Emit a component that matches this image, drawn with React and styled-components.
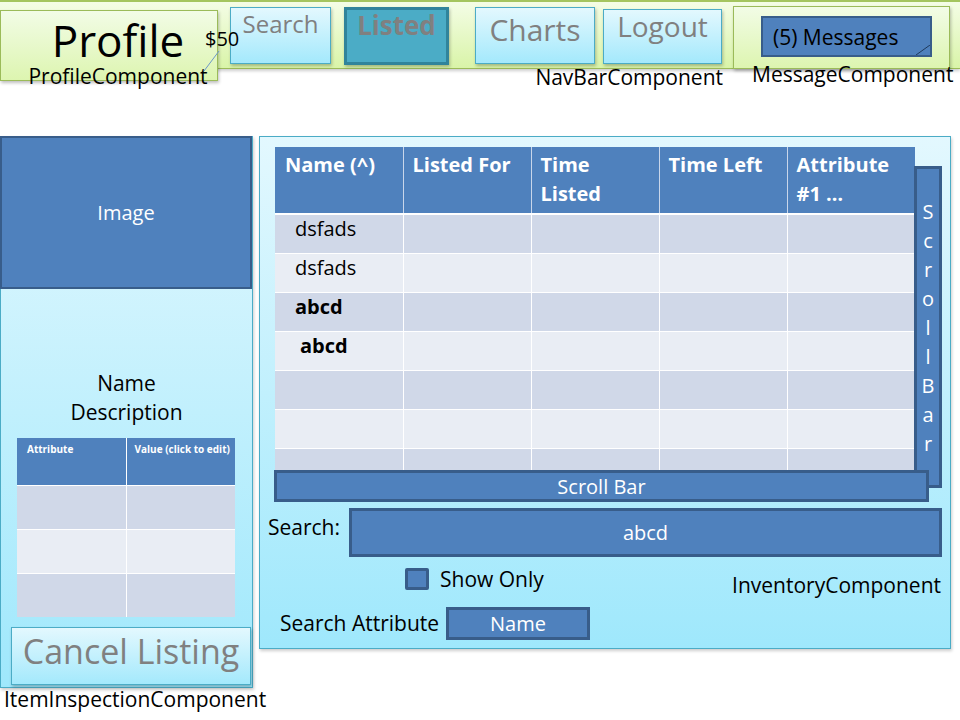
import React from "react";
import styled, { createGlobalStyle, css } from "styled-components";

const GlobalStyle = createGlobalStyle`
  html, body {
    margin: 0;
    padding: 0;
    background: #ffffff;
  }
  body {
    font-family: "Open Sans", "Liberation Sans", sans-serif;
    color: #000;
  }
`;

const lightBlue = css`
  background: linear-gradient(#e3f8fe, #a4e9fc);
  border: 1px solid #4bacc6;
  box-shadow: 1px 2px 3px rgba(0, 0, 0, 0.25);
`;

const darkBlue = css`
  background: #4f81bd;
  border: 2px solid #385d8a;
  color: #fff;
`;

const Page = styled.div`
  width: 960px;
  height: 720px;
  overflow: hidden;
`;

/* ---------- top bar ---------- */

const TopBar = styled.header`
  box-sizing: border-box;
  height: 69px;
  display: flex;
  align-items: flex-start;
  background: linear-gradient(#f4fde6, #d9f4a8);
  border-top: 2px solid #a4c55f;
  border-bottom: 1px solid #9bbb59;
  box-shadow: 0 2px 3px rgba(0, 0, 0, 0.2);
`;

const ProfileCard = styled.div`
  position: relative;
  flex-shrink: 0;
  box-sizing: border-box;
  width: 218px;
  height: 71px;
  margin-top: 8px;
  padding-left: 18px;
  display: flex;
  flex-direction: column;
  align-items: center;
  background: linear-gradient(#f2fce6, #ddf5b0);
  border: 1px solid #9bbb59;
  box-shadow: 1px 2px 3px rgba(0, 0, 0, 0.25);
`;

const ProfileTitle = styled.div`
  font-size: 44px;
  line-height: 44px;
  margin-top: 7px;
`;

const Caption = styled.div`
  font-size: 21px;
  line-height: 21px;
  white-space: nowrap;
`;

const ProfileCaption = styled(Caption)`
  margin-top: 4px;
`;

const Balance = styled.span`
  position: absolute;
  left: 204px;
  top: 18px;
  font-size: 20px;
  line-height: 20px;
`;

const Connector = styled.svg`
  position: absolute;
  left: 200px;
  top: 38px;
  overflow: visible;
`;

const NavGroup = styled.nav`
  margin-left: 12px;
  margin-top: 5px;
  display: flex;
  flex-direction: column;
  align-items: flex-end;
`;

const NavRow = styled.div`
  display: flex;
  align-items: flex-start;
`;

const NavButton = styled.div`
  box-sizing: border-box;
  width: ${(p) => p.$w}px;
  height: ${(p) => p.$h}px;
  margin-left: ${(p) => p.$gap || 0}px;
  margin-top: ${(p) => p.$top || 0}px;
  padding-top: ${(p) => p.$pad}px;
  text-align: center;
  color: #808080;
  font-size: ${(p) => p.$size}px;
  line-height: ${(p) => p.$size}px;
  ${(p) =>
    p.$active
      ? css`
          background: #4bacc6;
          border: 3px solid #31849b;
          font-weight: 700;
          box-shadow: 1px 2px 3px rgba(0, 0, 0, 0.25);
        `
      : lightBlue}
`;

const NavCaption = styled(Caption)`
  margin-top: 2px;
  margin-right: -1px;
`;

const MessageGroup = styled.div`
  margin-left: 11px;
  margin-top: 4px;
  display: flex;
  flex-direction: column;
`;

const MessageBox = styled.div`
  box-sizing: border-box;
  width: 217px;
  height: 63px;
  padding: 9px 0 0 27px;
  background: linear-gradient(#f2fce6, #ddf5b0);
  border: 1px solid #9bbb59;
  box-shadow: 1px 2px 3px rgba(0, 0, 0, 0.25);
`;

const MessageButton = styled.div`
  position: relative;
  box-sizing: border-box;
  width: 171px;
  height: 41px;
  padding-left: 10px;
  display: flex;
  align-items: center;
  ${darkBlue};
  color: #000;
  font-size: 21px;
`;

const CornerMark = styled.svg`
  position: absolute;
  right: 0;
  bottom: 0;
`;

const MessageCaption = styled(Caption)`
  margin-top: -5px;
  margin-left: 19px;
`;

/* ---------- main area ---------- */

const Main = styled.main`
  margin-top: 67px;
  display: flex;
  align-items: flex-start;
`;

const LeftColumn = styled.div`
  width: 253px;
  flex-shrink: 0;
  display: flex;
  flex-direction: column;
`;

const Panel = styled.section`
  box-sizing: border-box;
  flex-shrink: 0;
  width: ${(p) => p.$w}px;
  height: ${(p) => p.$h}px;
  background: linear-gradient(#e3f8fe, #9fe8fc);
  border: 1px solid #4bacc6;
  box-shadow: 1px 2px 3px rgba(0, 0, 0, 0.2);
`;

const InspectPanel = styled(Panel)`
  display: flex;
  flex-direction: column;
`;

const ImageBox = styled.div`
  box-sizing: border-box;
  height: 153px;
  margin: -1px 0 0 -1px;
  display: flex;
  align-items: center;
  justify-content: center;
  ${darkBlue};
  font-size: 20px;
`;

const NameBlock = styled.div`
  margin-top: 80px;
  text-align: center;
  font-size: 21px;
  line-height: 29px;
`;

const AttrTable = styled.table`
  margin: 11px 0 0 16px;
  width: 218px;
  border-collapse: collapse;
  table-layout: fixed;
`;

const AttrHead = styled.th`
  height: 43px;
  padding: 4px 0 0 10px;
  vertical-align: top;
  text-align: left;
  background: #4f81bd;
  color: #fff;
  font-size: 10px;
  font-weight: 700;
  border-right: 1px solid #fff;
  &:last-child {
    padding-left: 8px;
    border-right: none;
  }
`;

const AttrCell = styled.td`
  height: 43px;
  padding: 0;
  background: ${(p) => (p.$odd ? "#d0d8e8" : "#e9edf4")};
  border-top: 1px solid #fff;
  border-right: 1px solid #fff;
  &:last-child {
    border-right: none;
  }
`;

const GhostButton = styled.div`
  box-sizing: border-box;
  width: 240px;
  height: 58px;
  margin: 10px 0 0 10px;
  padding-top: 6px;
  text-align: center;
  color: #808080;
  font-size: 34px;
  line-height: 34px;
  ${lightBlue};
`;

const InspectCaption = styled(Caption)`
  margin: 1px 0 0 4px;
`;

const InventoryPanel = styled(Panel)`
  margin-left: 6px;
  padding: 10px 8px 0 8px;
  display: flex;
  flex-direction: column;
`;

const GridArea = styled.div`
  display: flex;
  align-items: flex-start;
`;

const TableClip = styled.div`
  margin-left: 7px;
  width: 640px;
  height: 323px;
  overflow: hidden;
`;

const ItemTable = styled.table`
  width: 640px;
  border-collapse: collapse;
  table-layout: fixed;
`;

const HeadCell = styled.th`
  box-sizing: border-box;
  height: 67px;
  padding: 3px 0 0 9px;
  vertical-align: top;
  text-align: left;
  background: #4f81bd;
  background-clip: padding-box;
  color: #fff;
  font-size: 20px;
  font-weight: 700;
  line-height: 29px;
  border-left: 1px solid #c9d6ea;
  border-bottom: 2px solid #fff;
  &:first-child {
    border-left: none;
    padding-left: 10px;
  }
`;

const BodyCell = styled.td`
  box-sizing: border-box;
  height: 39px;
  padding: 4px 0 0 ${(p) => (p.$indent ? 25 : 20)}px;
  vertical-align: top;
  background: ${(p) => (p.$odd ? "#d0d8e8" : "#e9edf4")};
  background-clip: padding-box;
  font-size: 20px;
  line-height: 20px;
  font-weight: ${(p) => (p.$bold ? 700 : 400)};
  border-left: 1px solid #fff;
  border-bottom: 1px solid #fff;
  &:first-child {
    border-left: none;
  }
`;

const VScroll = styled.div`
  box-sizing: border-box;
  width: 28px;
  height: 322px;
  margin: 19px 0 0 -1px;
  display: flex;
  flex-direction: column;
  align-items: center;
  justify-content: center;
  ${darkBlue};
  border-width: 3px;
  font-size: 20px;
  line-height: 29px;
`;

const HScroll = styled.div`
  position: relative;
  z-index: 1;
  box-sizing: border-box;
  width: 655px;
  height: 32px;
  margin: -18px 0 0 6px;
  display: flex;
  align-items: center;
  justify-content: center;
  ${darkBlue};
  border-width: 3px;
  font-size: 20px;
`;

const SearchRow = styled.div`
  margin-top: 6px;
  display: flex;
  align-items: flex-start;
`;

const Label = styled.span`
  font-size: 21px;
  line-height: 21px;
  white-space: nowrap;
`;

const SearchLabel = styled(Label)`
  width: 81px;
  margin-top: 9px;
`;

const SearchInput = styled.div`
  box-sizing: border-box;
  flex: 1;
  height: 49px;
  display: flex;
  align-items: center;
  justify-content: center;
  ${darkBlue};
  border-width: 3px;
  font-size: 20px;
`;

const OptionRow = styled.div`
  margin-top: 11px;
  display: flex;
  align-items: flex-start;
  justify-content: space-between;
`;

const CheckGroup = styled.label`
  margin-left: 137px;
  display: flex;
  align-items: center;
  gap: 11px;
  height: 22px;
`;

const CheckBox = styled.span`
  box-sizing: border-box;
  width: 24px;
  height: 22px;
  border-radius: 2px;
  ${darkBlue};
  border-width: 3px;
`;

const InventoryCaption = styled(Caption)`
  margin: 7px 1px 0 0;
`;

const AttrRow = styled.div`
  margin-top: 11px;
  display: flex;
  align-items: center;
`;

const AttrLabel = styled(Label)`
  margin-left: 12px;
  width: 166px;
`;

const SelectBox = styled.div`
  box-sizing: border-box;
  width: 144px;
  height: 33px;
  display: flex;
  align-items: center;
  justify-content: center;
  ${darkBlue};
  border-width: 3px;
  font-size: 20px;
`;

const columns = [
  ["Name (^)"],
  ["Listed For"],
  ["Time", "Listed"],
  ["Time Left"],
  ["Attribute", "#1 \u2026"],
];

const rows = [
  { name: "dsfads" },
  { name: "dsfads" },
  { name: "abcd", bold: true },
  { name: "abcd", bold: true, indent: true },
  {},
  {},
  {},
];

const navItems = [
  { label: "Search", w: 101, h: 57, size: 24, pad: 4 },
  { label: "Listed", w: 105, h: 58, size: 26, pad: 2, gap: 13, active: true },
  { label: "Charts", w: 120, h: 57, size: 30, pad: 7, gap: 26 },
  { label: "Logout", w: 119, h: 55, size: 28, pad: 2, gap: 8, top: 2 },
];

export default function App() {
  return (
    <Page>
      <GlobalStyle />
      <TopBar>
        <ProfileCard>
          <ProfileTitle>Profile</ProfileTitle>
          <ProfileCaption>ProfileComponent</ProfileCaption>
          <Balance>$50</Balance>
          <Connector width="20" height="24">
            <line x1="3" y1="22" x2="18" y2="2" stroke="#6b97c9" strokeWidth="1" />
          </Connector>
        </ProfileCard>

        <NavGroup>
          <NavRow>
            {navItems.map((n) => (
              <NavButton
                key={n.label}
                $w={n.w}
                $h={n.h}
                $size={n.size}
                $pad={n.pad}
                $gap={n.gap}
                $top={n.top}
                $active={n.active}
              >
                {n.label}
              </NavButton>
            ))}
          </NavRow>
          <NavCaption>NavBarComponent</NavCaption>
        </NavGroup>

        <MessageGroup>
          <MessageBox>
            <MessageButton>
              (5) Messages
              <CornerMark width="14" height="10">
                <line x1="0" y1="10" x2="14" y2="0" stroke="#1f3a5c" strokeWidth="1" />
              </CornerMark>
            </MessageButton>
          </MessageBox>
          <MessageCaption>MessageComponent</MessageCaption>
        </MessageGroup>
      </TopBar>

      <Main>
        <LeftColumn>
          <InspectPanel $w={253} $h={552}>
            <ImageBox>Image</ImageBox>
            <NameBlock>
              Name
              <br />
              Description
            </NameBlock>
            <AttrTable>
              <thead>
                <tr>
                  <AttrHead>Attribute</AttrHead>
                  <AttrHead>Value (click to edit)</AttrHead>
                </tr>
              </thead>
              <tbody>
                {[true, false, true].map((odd, i) => (
                  <tr key={i}>
                    <AttrCell $odd={odd} />
                    <AttrCell $odd={odd} />
                  </tr>
                ))}
              </tbody>
            </AttrTable>
            <GhostButton>Cancel Listing</GhostButton>
          </InspectPanel>
          <InspectCaption>ItemInspectionComponent</InspectCaption>
        </LeftColumn>

        <InventoryPanel $w={692} $h={513}>
          <GridArea>
            <TableClip>
              <ItemTable>
                <thead>
                  <tr>
                    {columns.map((c, i) => (
                      <HeadCell key={i}>
                        {c.map((line, j) => (
                          <div key={j}>{line}</div>
                        ))}
                      </HeadCell>
                    ))}
                  </tr>
                </thead>
                <tbody>
                  {rows.map((r, i) => (
                    <tr key={i}>
                      {columns.map((_, j) => (
                        <BodyCell
                          key={j}
                          $odd={i % 2 === 0}
                          $bold={r.bold}
                          $indent={j === 0 && r.indent}
                        >
                          {j === 0 ? r.name : null}
                        </BodyCell>
                      ))}
                    </tr>
                  ))}
                </tbody>
              </ItemTable>
            </TableClip>
            <VScroll>
              {"ScrollBar".split("").map((ch, i) => (
                <span key={i}>{ch}</span>
              ))}
            </VScroll>
          </GridArea>
          <HScroll>Scroll Bar</HScroll>

          <SearchRow>
            <SearchLabel>Search:</SearchLabel>
            <SearchInput>abcd</SearchInput>
          </SearchRow>

          <OptionRow>
            <CheckGroup>
              <CheckBox />
              <Label>Show Only</Label>
            </CheckGroup>
            <InventoryCaption>InventoryComponent</InventoryCaption>
          </OptionRow>

          <AttrRow>
            <AttrLabel>Search Attribute</AttrLabel>
            <SelectBox>Name</SelectBox>
          </AttrRow>
        </InventoryPanel>
      </Main>
    </Page>
  );
}
